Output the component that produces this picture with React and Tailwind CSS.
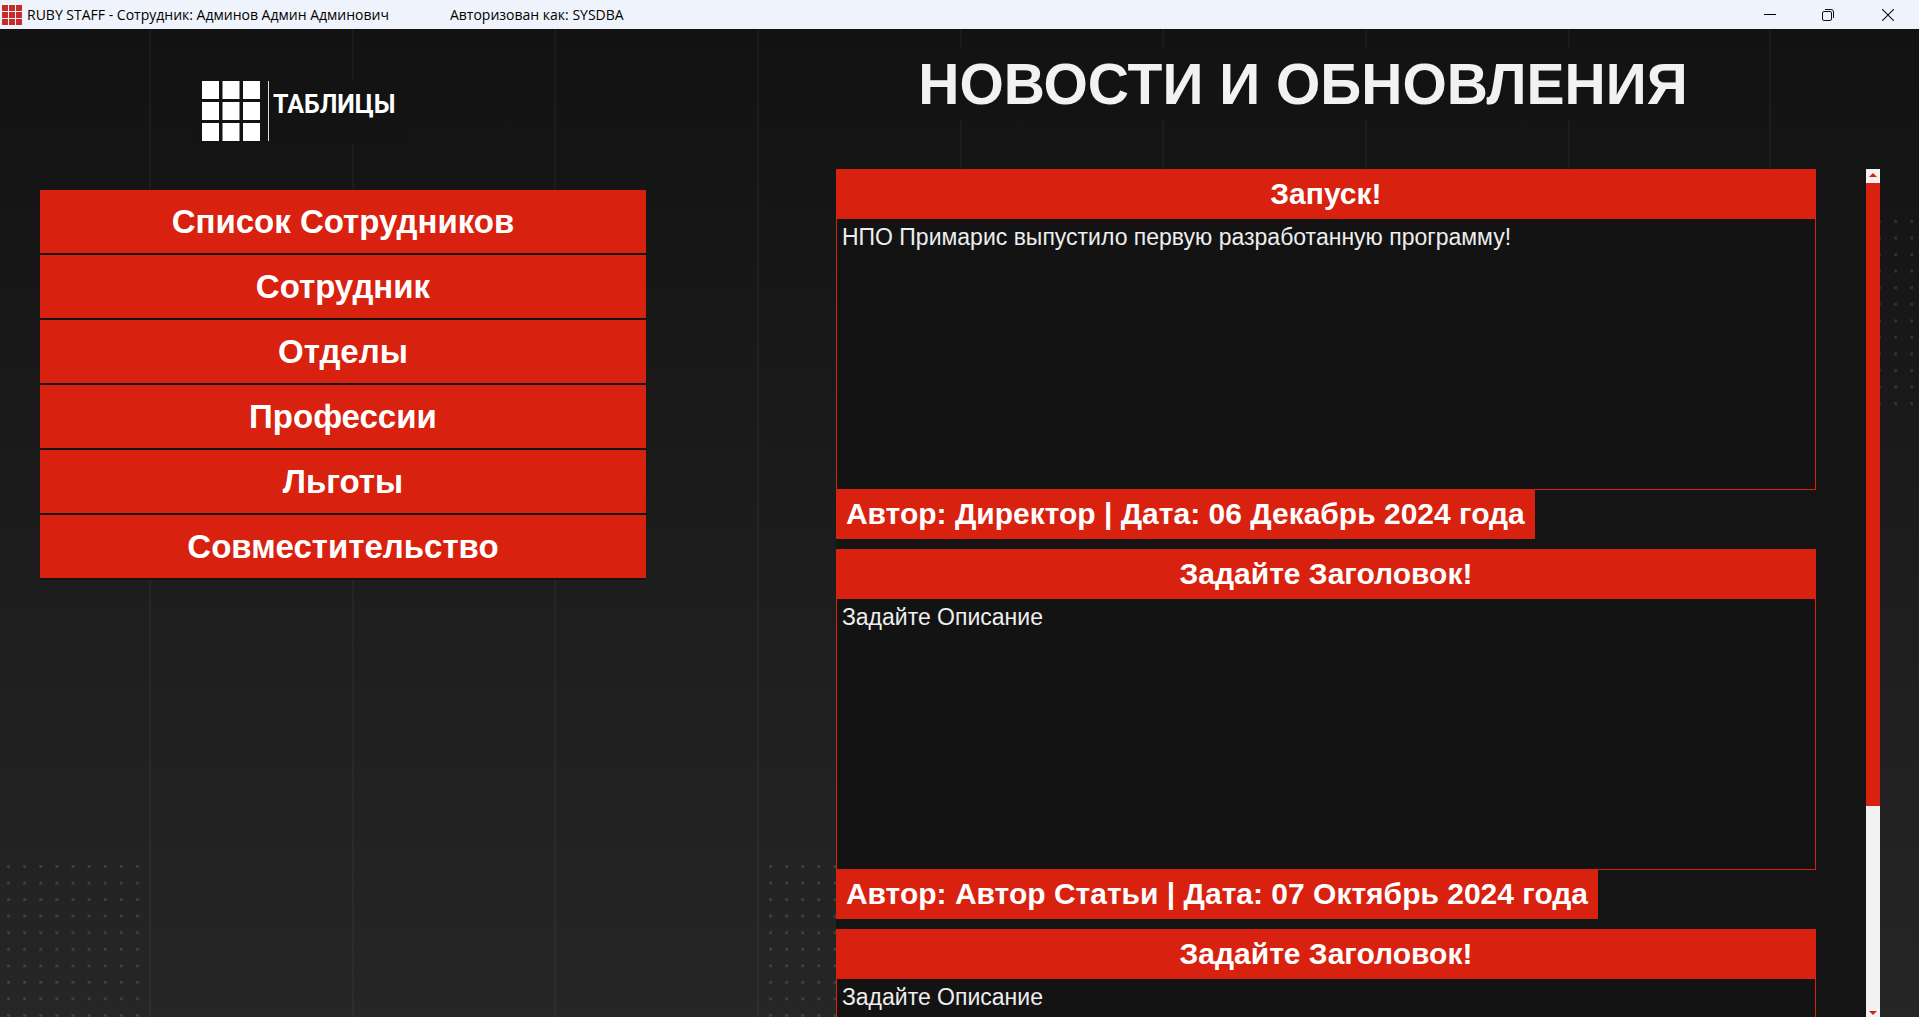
const menu = ['Список Сотрудников', 'Сотрудник', 'Отделы', 'Профессии', 'Льготы', 'Совместительство'];

const news = [
  { title: 'Запуск!', text: 'НПО Примарис выпустило первую разработанную программу!', author: 'Директор', date: '06 Декабрь 2024 года' },
  { title: 'Задайте Заголовок!', text: 'Задайте Описание', author: 'Автор Статьи', date: '07 Октябрь 2024 года' },
  { title: 'Задайте Заголовок!', text: 'Задайте Описание' },
];

function Backdrop() {
  const lines = [150, 353, 555, 758, 961, 1163, 1366, 1569, 1770];
  return (
    <svg aria-hidden="true" className="absolute inset-0 -z-10 h-full w-full" viewBox="0 0 1919 988" preserveAspectRatio="none">
      <defs>
        <linearGradient id="shade" x1="0" y1="0" x2="0" y2="1">
          <stop offset="0" stopColor="#121212" />
          <stop offset="0.15" stopColor="#151515" />
          <stop offset="1" stopColor="#262626" />
        </linearGradient>
        <pattern id="dots" width="16.12" height="16.55" patternUnits="userSpaceOnUse" patternTransform="translate(7 836)">
          <rect width="3" height="3" fill="#fff" opacity="0.08" />
          <rect x="0.5" y="0.5" width="2" height="2" fill="#fff" opacity="0.08" />
        </pattern>
        <pattern id="dotsMid" width="16.12" height="16.55" patternUnits="userSpaceOnUse" patternTransform="translate(769 836)">
          <rect width="3" height="3" fill="#fff" opacity="0.08" />
          <rect x="0.5" y="0.5" width="2" height="2" fill="#fff" opacity="0.08" />
        </pattern>
        <pattern id="dotsTop" width="16.12" height="16.55" patternUnits="userSpaceOnUse" patternTransform="translate(1878 191)">
          <rect width="3" height="3" fill="#fff" opacity="0.08" />
          <rect x="0.5" y="0.5" width="2" height="2" fill="#fff" opacity="0.06" />
        </pattern>
      </defs>
      <rect width="1919" height="988" fill="url(#shade)" />
      {lines.map((x) => (
        <rect key={x} x={x - 1} width="2" height="988" fill="#fff" opacity="0.035" />
      ))}
      <rect x="7" y="836" width="133" height="152" fill="url(#dots)" />
      <rect x="769" y="836" width="133" height="152" fill="url(#dotsMid)" />
      <rect x="1878" y="191" width="41" height="186" fill="url(#dotsTop)" />
    </svg>
  );
}

function AppIcon() {
  return (
    <svg aria-hidden="true" className="h-5 w-5" viewBox="0 0 20 20" fill="#c92a2a">
      {[0, 7, 14].map((x) => [0, 7, 14].map((y) => <rect key={`${x}-${y}`} x={x} y={y} width="6" height="6" />))}
    </svg>
  );
}

function TablesLogo() {
  return (
    <svg aria-hidden="true" className="h-[60px] w-[67px] shrink-0" viewBox="0 0 67 60" fill="#fff">
      {[0, 20.5, 41].map((x) => [0, 21, 42].map((y) => <rect key={`${x}-${y}`} x={x} y={y} width="17" height="18" />))}
      <rect x="66" width="1" height="60" fill="#ddd" />
    </svg>
  );
}

function TitleBar() {
  return (
    <header className="flex h-[29px] shrink-0 items-center bg-[#eff3fb] font-['Open_Sans',sans-serif] text-sm text-black">
      <div className="flex flex-1 items-center gap-[5px] pl-0.5">
        <AppIcon />
        <span>RUBY STAFF - Сотрудник: Админов Админ Админович</span>
        <span className="pl-14">Авторизован как: SYSDBA</span>
      </div>
      <button type="button" aria-label="Свернуть" className="flex h-full w-[58px] items-center justify-center">
        <svg className="h-3 w-3" viewBox="0 0 12 12"><path d="M0 5.5h12" stroke="#000" /></svg>
      </button>
      <button type="button" aria-label="Восстановить" className="flex h-full w-[58px] items-center justify-center">
        <svg className="h-3 w-3" viewBox="0 0 12 12" fill="none" stroke="#111">
          <rect x="0.5" y="2.5" width="9" height="9" rx="1.5" />
          <path d="M3 .5h6a2.5 2.5 0 0 1 2.5 2.5v6" />
        </svg>
      </button>
      <button type="button" aria-label="Закрыть" className="flex h-full w-[62px] items-center justify-center">
        <svg className="h-3 w-3" viewBox="0 0 12 12"><path d="M0 0l12 12M12 0L0 12" stroke="#111" strokeWidth="1.1" /></svg>
      </button>
    </header>
  );
}

function NewsCard({ item }) {
  return (
    <article className="mr-[50px] mb-2.5">
      <h2 className="bg-[#d9210f] text-center text-3xl leading-[50px] font-bold text-white">{item.title}</h2>
      <p className="-mb-px h-[271px] border border-t-0 border-[#d9210f] bg-[#131313] px-[5px] py-1 text-[23px] leading-7 text-[#eee]">{item.text}</p>
      {item.author && (
        <p className="relative w-fit bg-[#d9210f] px-2.5 text-3xl leading-[50px] font-bold text-white">
          Автор: {item.author} | Дата: {item.date}
        </p>
      )}
    </article>
  );
}

function ScrollBar() {
  return (
    <div className="flex w-3.5 shrink-0 flex-col bg-[#f2f2f2]">
      <button type="button" aria-label="Вверх" className="flex h-3.5 items-center justify-center pb-0.5">
        <svg className="h-1 w-2" viewBox="0 0 8 4" fill="#d9210f"><path d="M0 4L4 0l4 4z" /></svg>
      </button>
      <div className="flex-1">
        <div className="h-[76%] bg-[#d9210f]" />
      </div>
      <button type="button" aria-label="Вниз" className="flex h-3.5 items-end justify-center pb-0.5">
        <svg className="h-1 w-2" viewBox="0 0 8 4" fill="#d9210f"><path d="M0 0l4 4 4-4z" /></svg>
      </button>
    </div>
  );
}

export default function App() {
  return (
    <div className="flex h-screen flex-col overflow-hidden font-['Liberation_Sans',sans-serif]">
      <TitleBar />
      <main className="relative isolate flex min-h-0 flex-1 pr-[39px] pl-10">
        <Backdrop />
        <nav className="w-[32.93%] pt-[50px]">
          <h2 className="ml-[157px] flex h-16 w-[208px] items-start gap-1 bg-[#131313] pt-0.5 pl-[5px] font-[Roboto,sans-serif] text-[25px] leading-[48px] font-bold text-white">
            <TablesLogo />
            ТАБЛИЦЫ
          </h2>
          <ul className="mt-[47px] flex flex-col gap-0.5 bg-[#131313] pb-0.5">
            {menu.map((label) => (
              <li key={label}>
                <button type="button" className="h-[63px] w-full bg-[#d9210f] text-[33px] font-bold text-white">{label}</button>
              </li>
            ))}
          </ul>
        </nav>
        <section className="ml-[190px] flex min-w-0 flex-1 flex-col">
          <h1 className="mt-5 mr-[110px] mb-[50px] w-fit self-center bg-[#131313] px-1 text-[57px] leading-[70px] font-bold text-[#f2f2f2]">НОВОСТИ И ОБНОВЛЕНИЯ</h1>
          <div className="flex min-h-0 flex-1">
            <div className="flex-1 overflow-hidden bg-[#141414]">
              {news.map((item, i) => <NewsCard key={i} item={item} />)}
            </div>
            <ScrollBar />
          </div>
        </section>
      </main>
    </div>
  );
}
